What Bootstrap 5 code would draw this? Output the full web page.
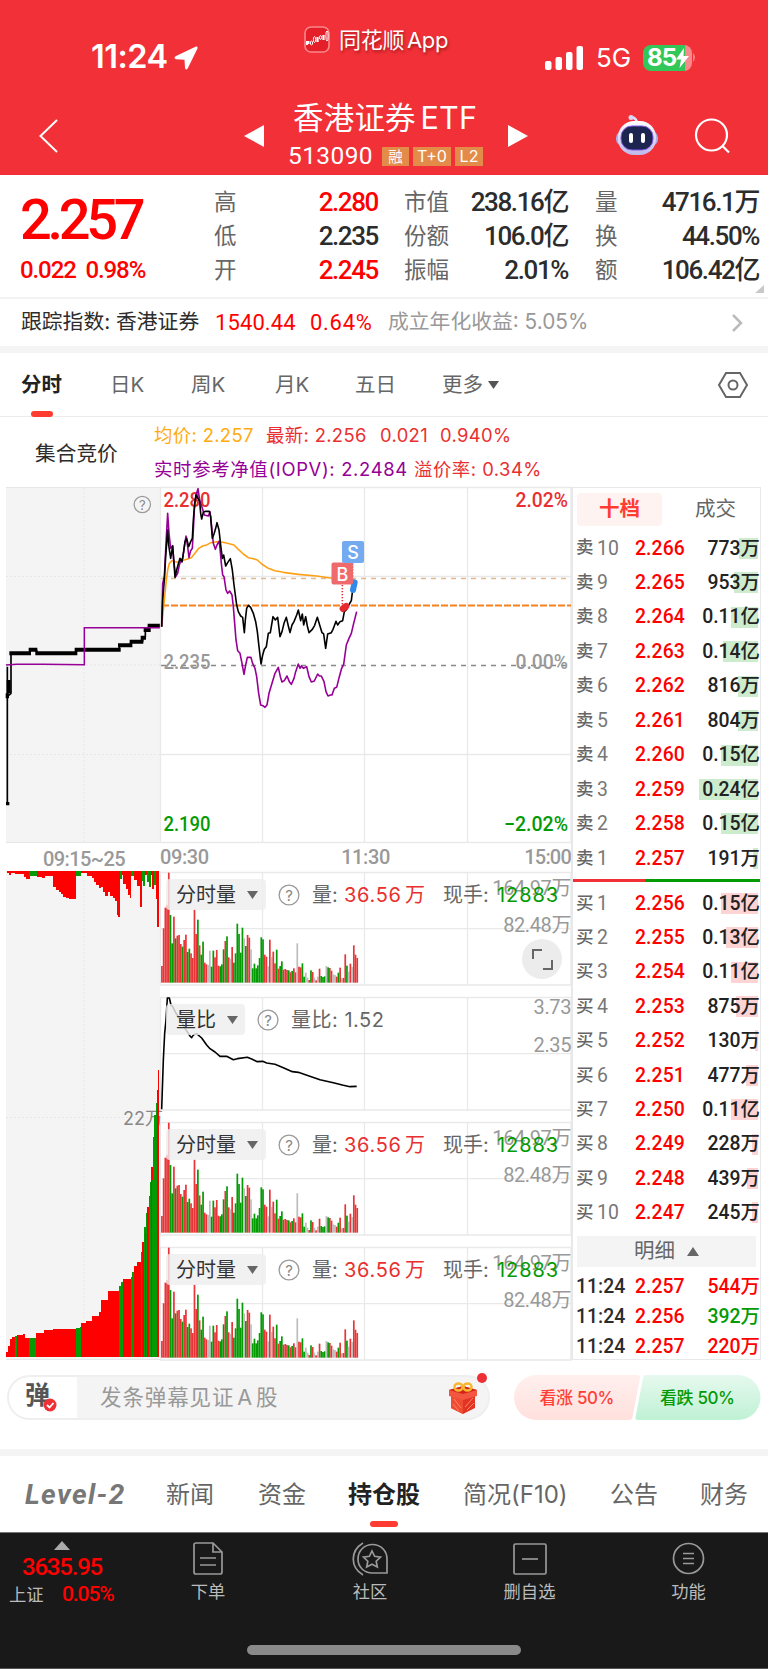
<!DOCTYPE html>
<html lang="zh-CN">
<head>
<meta charset="utf-8">
<meta name="viewport" content="width=device-width, initial-scale=1">
<title>香港证券ETF 513090</title>
<link href="https://cdn.jsdelivr.net/npm/bootstrap@5.3.0/dist/css/bootstrap.min.css" rel="stylesheet">
<style>
:root{--up:#f00;--dn:#049a04;--soft:#e93030;--ink:#2c2c2c;--mid:#666;--pale:#999}
body{width:768px;height:1669px;overflow:hidden;background:#fff;color:var(--ink);font-family:Inter,"Noto Sans CJK SC",sans-serif;line-height:1}
svg{display:block;overflow:visible}
.din{font-family:Roboto,"Noto Sans CJK SC",sans-serif;font-weight:500}
.up{color:var(--up)}.dn{color:var(--dn)}.soft{color:var(--soft)}.mid{color:var(--mid)}.pale{color:var(--pale)}
.line{display:grid;align-items:center;white-space:nowrap}
/* header */
.top{background:#f23037;height:175px;color:#fff}
.status{height:90px;grid-template-columns:91px 83px 130px 35px 206px 51px 47px auto}
.status>.low{margin-top:25px}
.clock{font-size:32.500px;font-weight:600;letter-spacing:-.5px}
.appname{font-size:22px;letter-spacing:-.3px;word-spacing:-3px;text-shadow:1px 2px 3px rgba(90,0,0,.5);padding-bottom:10px}
.batt{width:49px;height:26px;border-radius:8px;background:linear-gradient(90deg,#33c759 42px,#f8888c 42px);font-size:24px;font-weight:700;letter-spacing:-.8px}
.titlebar{height:85px;padding-top:6px;grid-template-columns:39px 205px 44px 220px 108px 79px auto}
.fund{font-size:30.5px;line-height:34px;letter-spacing:.2px;word-spacing:-4px}
.code{font-size:24.500px;font-weight:400;width:94px;letter-spacing:.4px}
.tag{background:#e38b48;font-size:16px;height:19px;line-height:19px;text-align:center;margin-right:4px}
/* quote */
.quote{height:122px;grid-template-columns:20px 194px 60px 104px 26px 60px 104px 27px 60px 104px;grid-template-rows:34px 34px 34px;padding-top:10px}
.quote .lb{font-size:22.5px;color:var(--mid)}
.quote .vl{font-size:26px;letter-spacing:-1.4px;text-align:right}
.last{font-size:56px;letter-spacing:-4.300px;grid-row:1/3;grid-column:2;padding-top:2px}
.chg{font-size:24px;letter-spacing:-1.1px;grid-row:3;grid-column:2}
.track{height:49px;border-top:2px solid #f3f3f3;font-size:20.8px;grid-template-columns:21px 194px 95px 78px 344px auto}
.track .din{font-size:22px;font-weight:400;letter-spacing:.1px}
.band{background:#f4f4f4;height:7px}
.tabs{height:64px;padding-top:1px;border-bottom:1px solid #ebebeb;font-size:20.5px;color:var(--mid);grid-template-columns:21px 89px 81px 84px 80px 87px 46px 230px auto}
.on{color:#222;font-weight:600}
.mark-on{position:absolute;height:6px;border-radius:3px;background:#ff3c32}
/* chart */
.legendrow{height:70px;grid-template-columns:35px 119px auto}
.legendrow .r{font-size:18.4px;height:34px;letter-spacing:.35px}
.chartgrid{display:grid;grid-template-columns:154px 411px 196px;grid-template-rows:873px;margin-left:6px;height:873px}
.plotlabel{font:500 20px Roboto,"Noto Sans CJK SC",sans-serif}
.axis{height:27px;font-size:20px;font-weight:400;color:#999;line-height:29px}
.panelbox{height:125px}
.tool{position:absolute;left:6px;top:9px;height:31px;font-size:20px;white-space:nowrap;color:var(--mid)}
.pick{background:rgba(238,238,238,.82);border-radius:4px;height:31px;padding-left:10px;color:#333}
.scale{position:absolute;right:0;font-size:20px;font-weight:400;color:#999;letter-spacing:-.4px}
.fullbtn{position:absolute;left:362px;top:69px;width:40px;height:40px;border-radius:50%;background:#ececec}
/* order book */
.book{border:1px solid #e8e8e8;border-left-width:2px;width:190px;height:873px}
.booktabs{height:43px;padding:4.500px 0 5px 4px;font-size:20.5px;color:var(--mid)}
.booktabs .sel{width:85px;height:33px;background:#fff3f2;border-radius:4px;color:#ff3c32;font-weight:600}
.lv{display:grid;grid-template-columns:21px 38px 64px 61px;padding-left:3px;align-items:center;font-size:19.4px;letter-spacing:.1px;white-space:nowrap}
.sell .lv{height:34.480px}.buy .lv{height:34.4px}
.lv .sd{font-size:17.5px}.lv .no{font-weight:400;color:#777}
.lv .vol{position:relative;text-align:right;color:#222;letter-spacing:0;justify-self:end}
.volbar{position:absolute;right:2.5px;top:50%;height:21px;margin-top:-10.5px;background:#cdebcd;z-index:0}
.buy .volbar{background:#fdd3d4}
.lv .vol b{font-weight:500;position:relative;z-index:1}
.ratio{height:3px;margin-top:3px;background:linear-gradient(90deg,#ef3036 72px,#049a04 72px)}
.more{height:31px;background:#f4f4f4;margin:6px 4px 5px;font-size:20.5px;color:var(--mid)}
.tick{display:grid;grid-template-columns:59px 60px 65px;padding-left:3px;height:29.8px;align-items:center;font-size:19.4px}
/* comment bar */
.chat{height:89px;padding:15px 7px 0}
.pill{width:484px;height:45px;border-radius:23px;border:2px solid #efefef;background:linear-gradient(90deg,#fff 68px,#f4f4f4 68px)}
.vote{width:247px;height:45px}
.sections{height:76px;padding-top:1px;font-size:24px;color:var(--mid);grid-template-columns:25px 141px 92px 90px 115px 147px 90px auto}
.lvl2{font:italic 700 28px Roboto;color:#777;letter-spacing:1.4px}
/* dock */
.dock{height:137px;background:#191919;border-top:1px solid #777;border-bottom:1px solid #555;color:#bbb;position:relative;font-size:17.3px}
.dockitems{height:76px;grid-template-columns:124px 168px 156px 163px 155px;text-align:center;align-items:start}
.homebar{width:274px;height:10px;border-radius:5px;background:#8a8a8a;margin:36px 0 0 247px}
</style>
</head>
<body>
<header class="top">
  <div class="status line">
    <span></span><span class="clock low">11:24</span>
    <svg class="low" width="24" height="24" viewBox="0 0 24 24"><path d="M22 .5 2 10Q-1 12 2 13.200L10.500 13.800 11 22Q12 25 13.800 22.300L23.500 2.500Q24 0 22 .5Z" fill="#fff"/></svg>
    <svg width="27" height="38" viewBox="0 0 27 38"><rect x="1" y="1" width="24" height="25" rx="6" fill="#e51f29" stroke="#f9888c" stroke-width="1.6"/><g stroke="#fff" fill="none"><path d="M3 15v4M4.500 15v3" stroke-width="2"/><ellipse cx="7.500" cy="17" rx="1.100" ry="2"/><ellipse cx="10.500" cy="13.500" rx="1.100" ry="3"/><path d="M13.500 11v5M19.500 9v5" stroke-width="2.200"/><ellipse cx="16.500" cy="11.500" rx="1" ry="2"/><ellipse cx="23" cy="10" rx="1.100" ry="5"/></g></svg>
    <span class="appname">同花顺 App</span>
    <svg class="low" width="39" height="24" viewBox="0 0 39 24" fill="#fff"><rect y="15" width="6.500" height="9" rx="2"/><rect x="10.500" y="11" width="6.500" height="13" rx="2"/><rect x="21" y="6" width="6.500" height="18" rx="2"/><rect x="31.500" width="6.500" height="24" rx="2"/></svg>
    <span class="low" style="font-size:26px">5G</span>
    <div class="low d-flex align-items-center"><div class="batt d-flex align-items-center ps-1">85<svg width="13" height="20" viewBox="0 0 13 20"><path d="M8 0 0 11.500h5L3.500 20 13 8H7.500Z" fill="#fff"/></svg></div><svg width="5" height="10"><path d="M1 0q4 4 0 9Z" fill="#f8888c"/></svg></div>
  </div>
  <div class="titlebar line">
    <span></span>
    <svg width="19" height="34" viewBox="0 0 19 34"><path d="M18 1 1.500 17 18 33" fill="none" stroke="#fff" stroke-width="2"/></svg>
    <svg width="20" height="22"><path d="M20 0v22L0 11Z" fill="#fff"/></svg>
    <div><div class="fund" style="padding-left:5px">香港证券 ETF</div><div class="d-flex align-items-center" style="padding-top:9px;margin-bottom:2px"><span class="code din">513090</span><span class="tag" style="width:27px;font-size:14.500px">融</span><span class="tag" style="width:38px">T+0</span><span class="tag" style="width:28px">L2</span></div></div>
    <svg width="20" height="22"><path d="M0 0v22L20 11Z" fill="#fff"/></svg>
    <svg width="42" height="42" viewBox="0 1 42 42"><defs><linearGradient id="bot" x2="0" y2="1"><stop stop-color="#fff"/><stop offset="1" stop-color="#bdb9ec"/></linearGradient></defs><path d="M21 9Q21 5 16 3" stroke="#e2e0f9" stroke-width="2.500" fill="none"/><circle cx="15" cy="3.500" r="2.500" fill="#d8d5f6"/><rect y="17" width="42" height="15" rx="7" fill="#a9b3ea"/><rect x="2" y="7" width="38" height="34" rx="16" fill="url(#bot)"/><rect x="5" y="12" width="32" height="24" rx="11" fill="#1c254f" stroke="#835ae5"/><rect x="13" y="19" width="4" height="10" rx="2" fill="#fff"/><rect x="25" y="19" width="4" height="10" rx="2" fill="#fff"/></svg>
    <svg width="35" height="35" viewBox="0 0 35 35" fill="none" stroke="#fff" stroke-width="2.200"><circle cx="16.500" cy="17" r="15.500"/><path d="m27.500 28 6.500 6.500"/></svg>
  </div>
</header>

<section class="quote line position-relative">
  <div class="last din up">2.257</div>
  <div class="chg din up">0.022&nbsp; 0.98%</div>
  <span class="lb" style="grid-column:3">高</span><span class="vl din up">2.280</span><i></i><span class="lb">市值</span><span class="vl din">238.16亿</span><i></i><span class="lb">量</span><span class="vl din">4716.1万</span>
  <span class="lb" style="grid-column:3">低</span><span class="vl din">2.235</span><i></i><span class="lb">份额</span><span class="vl din">106.0亿</span><i></i><span class="lb">换</span><span class="vl din">44.50%</span>
  <span class="lb" style="grid-column:3">开</span><span class="vl din up">2.245</span><i></i><span class="lb">振幅</span><span class="vl din">2.01%</span><i></i><span class="lb">额</span><span class="vl din">106.42亿</span>
  <svg class="position-absolute end-0 bottom-0 mb-1 me-1" width="9" height="8"><path d="M9 0v8H0Z" fill="#c8c8c8"/></svg>
</section>
<section class="track line">
  <span></span><span>跟踪指数: 香港证券</span><span class="din up">1540.44</span><span class="din up" style="letter-spacing:.7px">0.64%</span><span class="pale">成立年化收益: 5.05%</span>
  <svg width="10" height="18"><path d="m1 1 8 8-8 8" fill="none" stroke="#bbb" stroke-width="2.500"/></svg>
</section>
<div class="band"></div>
<nav class="tabs line position-relative">
  <span></span><span class="on">分时</span><span>日K</span><span>周K</span><span>月K</span><span>五日</span><span>更多</span>
  <svg width="11" height="8"><path d="M0 0h11L5.500 8Z" fill="#555"/></svg>
  <svg width="30" height="26" viewBox="0 0 30 26" fill="none" stroke="#666" stroke-width="2"><path d="M8 1h14l7 12-7 12H8L1 13Z"/><circle cx="15" cy="13" r="4.500"/></svg>
  <span class="mark-on" style="left:31px;top:58px;width:22px"></span>
</nav>
<section class="legendrow line">
  <span></span><span style="font-size:20.700px;padding-top:5px">集合竞价</span>
  <div>
    <div class="r line soft" style="grid-template-columns:112px 114px 60px auto"><span style="color:#ffab0f">均价: 2.257</span><span>最新: 2.256</span><span>0.021</span><span>0.940%</span></div>
    <div class="r line soft" style="grid-template-columns:260px auto"><span style="color:#960096;letter-spacing:.68px">实时参考净值(IOPV): 2.2484</span><span style="letter-spacing:.5px">溢价率: 0.34%</span></div>
  </div>
</section>

<main class="chartgrid">
  <div class="bg-white">
    <svg width="154" height="356" viewBox="6 487 154 356">
      <rect x="6" y="487" width="154" height="356" fill="#f4f4f4"/>
      <g stroke="#e7e7e7" stroke-dasharray="2 2"><path d="M84 488V843M6 576.500H160M6 665H160M6 754.500H160"/></g>
      <path d="M6 487.500H160M6 842.500H160" stroke="#e6e6e6"/>
      <g transform="translate(0 480) scale(.33333)" fill="none">
        <g stroke="#000" stroke-width="5" stroke-linejoin="round"><path d="M22 970V560M22 650L33 640 33 555V520M90 520V509M110 509V520M228 520V509M358 509V496M392 496V485M428 485V472M436 472V450M446 450V437"/><path stroke-width="12" d="M28 520H93M86 509H112M106 520H232M224 509H362M354 496H397M389 485H430M422 473H438M431 450H452M443 437H480M26 600V640"/><path stroke-width="10" d="M22 640V655M18 971H28"/></g>
        <path d="M18 555 50 553 130 553 253 554V443H483" stroke="#960096" stroke-width="4.500"/>
      </g>
      <g fill="none" stroke="#999" stroke-width="1.200"><circle cx="142.300" cy="504.500" r="8.200"/></g><text x="142.300" y="509.500" font-size="13" text-anchor="middle" fill="#888">?</text>
    </svg>
    <div class="axis din" style="padding-left:37px;line-height:32px;letter-spacing:-.6px;font-weight:500">09:15~25</div>
    <svg width="154" height="490" viewBox="6 870 154 490">
      <rect x="6" y="871" width="154" height="488" fill="#f4f4f4"/>
      <path d="M84 872V1359M6 1117.500H160" stroke="#e7e7e7" stroke-dasharray="2 2"/>
      <text x="123" y="1124.500" font-size="18" fill="#888" font-family="Inter,Noto Sans CJK SC">22万</text>
      <g id="auctionTop" transform="translate(0 860) scale(.33333)" shape-rendering="crispEdges"></g>
      <g id="auctionVol" transform="translate(0 1100) scale(.33333)" shape-rendering="crispEdges"></g>
      <path d="M6 1359.500H160" stroke="#e6e6e6"/>
    </svg>
  </div>

  <div>
    <svg width="411" height="356" viewBox="160 487 411 356">
      <g stroke="#e9e9e9" stroke-width="1.300" fill="none"><path d="M160.500 487.500H571V842.500H160.500ZM262.500 487V843M364.500 487V843M467.500 487V843M160 576.500H571M160 754.500H571"/></g>
      <path d="M161 578.500H571" stroke="#e2b98c" stroke-width="1.300" stroke-dasharray="5 5"/>
      <path d="M161 665.500H571" stroke="#888" stroke-width="1.300" stroke-dasharray="5 5"/>
      <path d="M162 605.500H571" stroke="#f58220" stroke-width="1.800" stroke-dasharray="7 2"/>
      <g class="plotlabel"><text x="163.500" y="507" fill="#e93030" textLength="47" lengthAdjust="spacingAndGlyphs">2.280</text><text x="163.500" y="669" fill="#999" textLength="47" lengthAdjust="spacingAndGlyphs">2.235</text><text x="163.500" y="830.500" fill="#049a04" textLength="47" lengthAdjust="spacingAndGlyphs">2.190</text>
      <text x="515.500" y="507" fill="#e93030" textLength="52.500" lengthAdjust="spacingAndGlyphs">2.02%</text><text x="515.500" y="669" fill="#999" textLength="52.500" lengthAdjust="spacingAndGlyphs">0.00%</text><text x="504" y="830.500" fill="#049a04" textLength="64" lengthAdjust="spacingAndGlyphs">−2.02%</text></g>
      <g transform="translate(150 480) scale(.33333)" fill="none" stroke-width="4.800" stroke-linejoin="round">
        <polyline stroke="#ffa014" points="35,440 42,370 48,310 53,270 58,250 66,242 75,245 85,247 95,242 110,238 124,233 133,222 145,206 158,198 172,194 182,188 200,185 215,186 232,190 252,195 265,208 280,222 295,233 310,236 322,240 335,252 355,265 375,272 400,277 445,283 500,288 545,295 600,295"/>
        <polyline stroke="#960096" points="35,440 38,310 43,290 48,190 53,100 57,160 62,205 68,197 71,240 77,290 83,280 88,255 93,240 98,235 103,200 108,168 113,200 117,233 122,212 127,205 130,150 133,90 138,45 144,26 149,60 157,85 163,105 175,108 180,95 186,150 190,190 196,208 201,195 208,183 214,250 218,285 222,290 228,330 233,340 239,333 246,345 250,380 254,430 258,480 263,512 270,520 276,550 282,583 287,555 292,532 303,532 307,548 315,565 320,590 326,640 332,675 339,677 345,682 351,675 357,640 366,610 375,580 385,562 391,590 396,606 403,602 411,588 418,605 424,613 432,595 437,575 445,552 450,565 454,558 460,565 470,560 477,590 484,606 493,603 503,582 508,588 514,588 522,605 528,635 534,648 541,645 546,645 553,625 560,622 568,590 575,565 581,553 589,495 597,475 604,460 611,430 620,395"/>
        <polyline stroke="#000" points="35,440 38,360 43,300 47,230 53,150 56,195 62,235 68,198 72,250 75,292 80,270 84,255 90,235 96,246 101,215 105,185 110,175 116,200 122,185 127,175 130,120 134,70 138,45 144,55 149,65 152,100 155,117 160,97 165,94 178,94 182,110 187,175 192,162 197,145 201,128 207,150 212,195 217,235 221,225 227,258 233,248 241,236 247,270 252,315 260,375 265,395 272,408 278,412 283,458 286,420 290,385 295,376 302,382 310,400 317,425 322,455 327,500 333,552 338,525 343,508 349,500 355,460 361,458 369,410 376,420 383,412 390,470 396,455 402,430 409,412 415,438 420,458 426,435 432,425 440,405 445,390 452,422 457,402 461,435 467,410 472,438 477,458 487,448 494,436 502,412 509,435 516,458 521,462 527,505 533,462 544,458 549,448 552,440 558,424 563,435 570,425 578,422 583,395 590,388 598,372 604,362 608,330 616,308"/>
        <path stroke="#318ae8" stroke-width="18" stroke-linecap="round" d="M609 330 614 307"/>
        <path stroke="#e52b30" stroke-width="20" stroke-linecap="round" d="M579 386 588 379"/>
        <path stroke="#e52b30" stroke-dasharray="4 5" d="M577 315V375"/><path stroke="#318ae8" stroke-dasharray="4 5" d="M608 250V305"/>
      </g>
      <rect x="331.500" y="562.500" width="21.500" height="22" rx="2" fill="#ef6a6d"/><rect x="342" y="541" width="22" height="22" rx="2" fill="#74aaf0"/>
      <g fill="#fff" font-size="18" font-family="Inter" text-anchor="middle" font-weight="500"><text x="342.500" y="580.500">B</text><text x="353" y="559">S</text></g>
    </svg>
    <div class="axis din d-flex justify-content-between" style="font-weight:500"><span style="letter-spacing:-.4px">09:30</span><span style="letter-spacing:-.4px;padding-right:2px">11:30</span><span style="letter-spacing:-.8px">15:00</span></div>
    <div id="panels"></div>
  </div>

  <aside class="book">
    <div class="booktabs d-flex"><div class="sel d-flex align-items-center justify-content-center">十档</div><div class="flex-fill d-flex align-items-center justify-content-center" style="padding-left:9px">成交</div></div>
    <div class="sell" id="sell"></div>
    <div class="ratio"></div>
    <div class="buy" id="buy" style="padding-top:4.500px"></div>
    <div class="more d-flex align-items-center justify-content-center">明细<svg style="margin-left:12px" width="12" height="9"><path d="M0 9h12L6 0Z" fill="#666"/></svg></div>
    <div class="tick din"><span>11:24</span><span class="up">2.257</span><span class="up text-end">544万</span></div>
    <div class="tick din"><span>11:24</span><span class="up">2.256</span><span class="dn text-end">392万</span></div>
    <div class="tick din"><span>11:24</span><span class="up">2.257</span><span class="up text-end">220万</span></div>
  </aside>
</main>

<section class="chat d-flex">
  <div class="pill position-relative d-flex align-items-center">
    <span style="font-size:25px;font-weight:700;color:#555;margin-left:16px;margin-top:-4px;width:75px">弹</span>
    <svg class="position-absolute" style="left:34px;top:21px" width="14" height="14"><circle cx="7" cy="7" r="6.500" fill="#ef3036"/><path d="m4 7 2.500 2.500L10.500 5" fill="none" stroke="#fff" stroke-width="1.800"/></svg>
    <span class="pale" style="font-size:21.500px;letter-spacing:.9px;word-spacing:-4px;padding-top:1px">发条弹幕见证 A 股</span>
    <svg class="position-absolute" style="left:439px;top:5px" width="30" height="32" viewBox="0 0 30 32"><path d="M3 12h24v14l-12 6L3 26Z" fill="#e33324"/><path d="M15 16v16L3 26V12Z" fill="#f04b33"/><path d="M1 8 15 4l14 4v6l-14 4L1 14Z" fill="#f4573f"/><path d="m1 8 14 4 14-4-14-4Z" fill="#d02818"/><path d="m6 17 7 9M5 22l6 7M17 25l8-9M19 28l7-7" stroke="#f98a62"/><g fill="none" stroke="#f9b731" stroke-width="2.500"><ellipse cx="10.500" cy="5" rx="4" ry="3.500"/><ellipse cx="19.500" cy="5" rx="4" ry="3.500"/></g></svg>
    <svg class="position-absolute" style="left:467px;top:-5px" width="12" height="12"><circle cx="6" cy="6" r="5" fill="#ec3034"/></svg>
  </div>
  <svg class="vote" style="margin-left:24px" width="247" height="45" viewBox="0 0 247 45"><defs><linearGradient id="vr" x2="0" y2="1"><stop stop-color="#fff0ee"/><stop offset="1" stop-color="#ffe0dd"/></linearGradient><linearGradient id="vg" x2="0" y2="1"><stop stop-color="#e6f9ee"/><stop offset="1" stop-color="#bff1d4"/></linearGradient></defs>
    <path d="M22.500 0H123Q126.500 0 126 3L118.500 42Q118 45 115 45H22.500A22.500 22.500 0 0 1 22.500 0Z" fill="url(#vr)"/><path d="M132 0H224A22.500 22.500 0 0 1 224 45H124Q121 45 121.500 42L129 3Q129.500 0 132 0Z" fill="url(#vg)"/>
    <g font-size="17" font-family="Inter,Noto Sans CJK SC" font-weight="500"><text x="25.500" y="29" fill="#ff4038" textLength="75">看涨 50%</text><text x="146" y="29" fill="#049a04" textLength="75">看跌 50%</text></g></svg>
</section>
<div class="band"></div>
<nav class="sections line position-relative"><span></span><span class="lvl2">Level-2</span><span>新闻</span><span>资金</span><span class="on">持仓股</span><span>简况(F10)</span><span>公告</span><span>财务</span><span class="mark-on" style="left:370px;top:65px;width:28px"></span></nav>

<footer class="dock">
  <div class="dockitems line">
    <div><svg class="mx-auto" style="margin-top:8px" width="16" height="9"><path d="M8 0 16 9H0Z" fill="#aaa"/></svg><div class="din up" style="font-size:24px;letter-spacing:-1.200px;margin-top:5px">3635.95</div><div class="d-flex align-items-center" style="padding-left:9px;margin-top:5px"><span style="width:53px;text-align:left">上证</span><span class="din up" style="font-size:21px;letter-spacing:-1.100px">0.05%</span></div></div>
    <div><svg class="mx-auto" style="margin-top:9px" width="30" height="33" viewBox="0 0 30 33" fill="none" stroke="#999" stroke-width="1.700"><path d="M3 1H20L29 10V30Q29 32 27 32H3Q1 32 1 30V3Q1 1 3 1ZM20 1V10H29M7 16H23M7 23H23"/></svg><div style="margin-top:8px">下单</div></div>
    <div><svg class="mx-auto" style="margin-top:9px" width="36" height="34" viewBox="0 0 36 34" fill="none" stroke="#999" stroke-width="1.700"><path d="M11 1C-2 9-2 25 11 33"/><path d="M20.500 2.500C29 2.500 35 9 35 17V31H20.500C12 31 6 25 6 17S12 2.500 20.500 2.500Z"/><path d="m20 9 2.600 5.300 5.900.8-4.300 4.100 1.100 5.800-5.300-2.800-5.300 2.800 1.100-5.800-4.300-4.100 5.900-.8Z"/></svg><div style="margin-top:7px">社区</div></div>
    <div><svg class="mx-auto" style="margin-top:10px" width="34" height="32" fill="none" stroke="#999" stroke-width="1.700"><rect x="1" y="1" width="32" height="30" rx="1.500"/><path d="M9 16H25"/></svg><div style="margin-top:8px">删自选</div></div>
    <div><svg class="mx-auto" style="margin-top:9px" width="33" height="33" fill="none" stroke="#999" stroke-width="1.700"><circle cx="16.500" cy="16.500" r="15"/><path d="M11 11.500H22M11 16.500H22M11 21.500H22"/></svg><div style="margin-top:8px">功能</div></div>
  </div>
  <div class="homebar"></div>
</footer>

<script src="https://cdn.jsdelivr.net/npm/bootstrap@5.3.0/dist/js/bootstrap.bundle.min.js"></script>
<script>
const tone={r:'#ff0000',g:'#049a04'};
const rect=(x,y,w,h,f)=>`<rect x="${x}" y="${y}" width="${w}" height="${h}" fill="${f}"/>`;
/* call-auction unmatched volume hanging from the top: start, end, depth, tone */
const hang='20,477,38,r 26,32,46,r 45,72,42,r 72,78,50,r 78,90,56,r 88,111,48,g 111,125,50,r 125,136,53,r 136,160,48,r 160,167,82,r 167,176,90,r 176,184,97,r 184,190,103,r 190,197,110,r 197,206,113,r 206,228,116,r 228,243,49,g 243,262,40,r 262,275,47,r 275,283,55,r 283,289,66,r 289,296,76,r 296,302,84,r 302,308,82,r 308,316,97,r 316,324,108,r 324,330,96,r 330,340,107,r 340,345,113,r 345,350,124,r 350,354,166,r 354,359,171,r 359,365,58,g 365,370,45,r 370,377,72,r 377,384,88,r 384,390,104,r 390,394,113,r 394,403,48,g 403,412,59,r 412,420,78,r 420,427,140,r 427,430,62,g 430,436,78,g 436,440,45,r 440,446,65,g 446,452,80,g 452,456,45,r 456,461,88,r 461,467,74,g 467,472,118,r 472,477,201,r';
auctionTop.innerHTML=hang.split(' ').map(s=>{const[a,b,d,c]=s.split(',');return rect(a,34,b-a,d-34,tone[c])}).join('');
/* matched volume rising from the base line */
const rise='18,25,757,r 25,30,738,r 30,36,716,r 36,44,712,r 44,52,708,g 52,70,705,r 70,76,702,r 76,88,714,r 88,108,713,g 108,133,700,r 133,160,689,r 160,200,688,r 200,227,686,r 227,240,685,g 240,244,682,g 244,258,670,r 258,275,662,r 275,297,647,r 297,303,636,r 303,323,600,r 323,356,573,r 356,362,557,g 362,369,546,g 369,392,537,r 392,397,530,g 397,403,515,g 403,410,497,r 410,424,487,r 424,427,457,g 427,432,425,r 432,438,380,g 438,442,340,g 442,446,320,r 446,449,288,g 449,453,245,g 453,459,200,r 459,463,110,g 463,467,45,g 467,470,8,g 470,473,-30,r 473,477,-90,r';
auctionVol.innerHTML=rise.split(' ').map(s=>{const[a,b,t,c]=s.split(',');return rect(a,t,b-a,772-t,tone[c])}).join('')+rect(434,400,3,372,tone.r)+rect(455,240,3,532,tone.g);
/* one-minute volume: top of each bar and its tone (x = unchanged) */
const mins='318r 205r 143r 135r 38r 165g 250g 170r 235g 227r 225r 252r 260g 240r 224r 276g 266g 280r 294r 148r 222r 179g 256r 284g 245g 308r 313r 315x 272x 320g 272g 292r 270r 317r 319g 313g 268g 243r 229g 292r 297x 261r 308g 280g 191g 222g 278g 203g 235x 258g 225r 233r 268x 325g 311g 325g 316g 294g 232g 238g 284r 290r 319x 239r 291x 275r 310r 269g 326r 318g 304g 329r 327r 330r 331g 337r 333g 325r 337r 250x 320r 322r 310g 350g 338x 353x 360r 331g 336r 353x 361r 350x 326r 348g 351g 349g 318x 322g 324r 332r 343x 345x 350r 338g 323r 355x 354r 283r 317g 335x 311r 321x 256r 284r 294r'.split(' ');
const mt={r:'#e83538',g:'#049a04',x:'#bdbdbd'};
const bars='<g transform="translate(150 860) scale(.33333)">'+mins.map((m,i)=>rect((33.2+i*5.14).toFixed(1),+m.slice(0,-1),5.1,368-m.slice(0,-1),mt[m.slice(-1)])).join('')+'</g>';
const ratio='<g transform="translate(150 735) scale(.33333)"><polyline fill="none" stroke="#000" stroke-width="4.800" stroke-linejoin="round" points="35,748 40,600 44,520 48,480 52,414 58,414 63,435 68,440 78,460 92,480 105,505 120,528 125,533 131,524 140,521 155,534 170,555 180,566 195,576 210,589 230,589 250,599 262,596 292,592 305,597 322,605 338,604 350,609 375,613 400,623 427,635 445,637 475,647 510,659 550,668 580,676 600,680 620,679"/></g>';
const frame='<path d="M160.500 872.500H571V985H160.500ZM262.500 872V985M364.500 872V985M467.500 872V985M160 928.700H571" fill="none" stroke="#e9e9e9" stroke-width="1.300"/>';
const help='<svg width="22" height="22" viewBox="0 0 22 22"><circle cx="11" cy="11" r="9.900" fill="none" stroke="#999" stroke-width="1.300"/><text x="11" y="16.500" font-size="15" fill="#888" text-anchor="middle">?</text></svg>';
const caret='<svg width="11" height="8"><path d="M0 0h11L5.500 8Z" fill="#666"/></svg>';
const volTool=`<div class="tool d-flex align-items-center"><span class="pick d-flex align-items-center" style="width:100px;gap:11px">分时量${caret}</span><span style="margin:0 12px 0 12px">${help}</span><span style="width:32px">量:</span><span class="soft" style="width:99px;letter-spacing:.7px;word-spacing:-3px">36.56 万</span><span style="width:54px">现手:</span><span class="dn" style="letter-spacing:.9px">12883</span></div>`;
const ratioTool=`<div class="tool d-flex align-items-center"><span class="pick d-flex align-items-center" style="width:79px;gap:11px">量比${caret}</span><span style="margin:0 12px 0 12px">${help}</span><span style="letter-spacing:.5px">量比: 1.52</span></div>`;
const panel=(k)=>{const v=k!==1;return `<div class="panelbox position-relative"><svg width="411" height="125" viewBox="160 870 411 125">${frame}${v?bars:ratio}</svg>
<span class="scale din" style="top:${v?8:2}px">${v?'164.97万':'3.73'}</span><span class="scale din" style="top:${v?45:40}px">${v?'82.48万':'2.35'}</span>${v?volTool:ratioTool}${k===0?'<div class="fullbtn"><svg width="40" height="40" fill="none" stroke="#666" stroke-width="2"><path d="M11 20V11H20M30 21V30H21"/></svg></div>':''}</div>`};
panels.innerHTML=[0,1,2,3].map(panel).join('');
/* ten price levels on each side: number, price, volume, bar width */
const level=(side)=>([n,p,v,w])=>`<div class="lv din"><span class="sd mid">${side}</span><span class="no">${n}</span><span class="up">${p}</span><span class="vol"><i class="volbar" style="width:${w}px"></i><b>${v}</b></span></div>`;
sell.innerHTML=[[10,'2.266','773万',19],[9,'2.265','953万',24],[8,'2.264','0.11亿',27],[7,'2.263','0.14亿',35],[6,'2.262','816万',20],[5,'2.261','804万',20],[4,'2.260','0.15亿',37],[3,'2.259','0.24亿',59],[2,'2.258','0.15亿',37],[1,'2.257','191万',5]].map(level('卖')).join('');
buy.innerHTML=[[1,'2.256','0.15亿',37],[2,'2.255','0.13亿',32],[3,'2.254','0.11亿',27],[4,'2.253','875万',22],[5,'2.252','130万',3],[6,'2.251','477万',12],[7,'2.250','0.11亿',27],[8,'2.249','228万',6],[9,'2.248','439万',11],[10,'2.247','245万',6]].map(level('买')).join('');
</script>
</body>
</html>
